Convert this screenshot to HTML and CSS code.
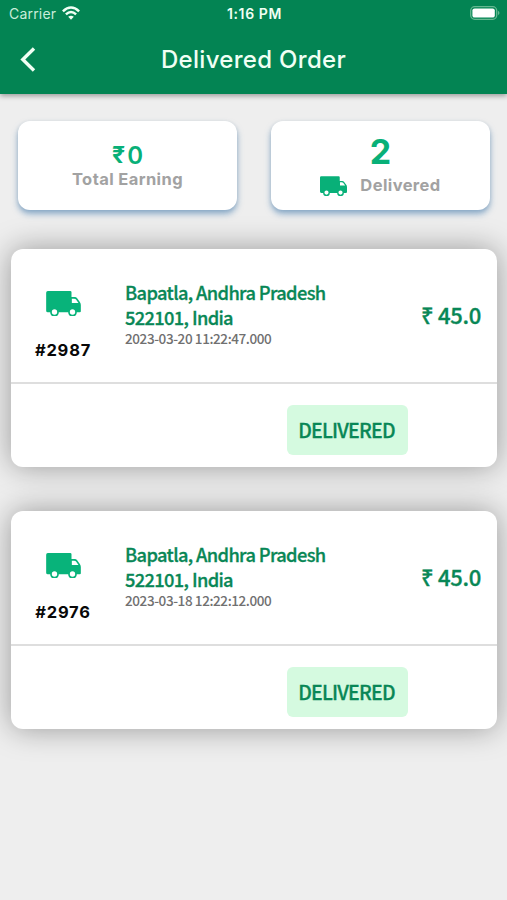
FILE: index.html
```html
<!DOCTYPE html>
<html lang="en">
<head>
<meta charset="utf-8">
<title>Delivered Order</title>
<link rel="stylesheet" href="styles.css">
</head>
<body>
<svg class="defs" aria-hidden="true">
  <symbol id="truck" viewBox="0 0 104 75">
    <path fill-rule="evenodd" d="M5 0H72Q76 0 76 4V18H86Q90 18 93 22L101 33Q104 37 104 42V61Q104 64 101 64H92A13 13 0 0 1 66 64H38A13 13 0 0 1 12 64H5Q0 64 0 59V5Q0 0 5 0ZM77 23V36H97L89 25Q87 23 84 23ZM25 55A8 8 0 1 0 25 71A8 8 0 1 0 25 55ZM79 55A8 8 0 1 0 79 71A8 8 0 1 0 79 55Z"/>
  </symbol>
</svg>
<header class="header">
  <div class="status">
    <div class="carrier"><span class="carrier-name">Carrier</span>
      <svg class="wifi" viewBox="0 0 18 14" fill="none" stroke="#f0fff4" stroke-width="2.5"><path d="M.9 5.3Q9-2.3 17.1 5.3M3.9 8.4Q9 3.7 14.1 8.4"/><path d="M6.2 10.8Q9 8.5 11.8 10.8L9 13.8Z" fill="#f0fff4" stroke="none"/></svg>
    </div>
    <span class="time">1:16 PM</span>
    <svg class="battery" viewBox="0 0 30 14"><rect x=".7" y=".7" width="26" height="12.6" rx="4" fill="none" stroke="#65b891" stroke-width="1.3"/><rect x="2.4" y="2.4" width="22.4" height="9.2" rx="2.2" fill="#fff"/><path d="M28 4.8Q31 7 28 9.2Z" fill="#65b891"/></svg>
  </div>
  <div class="appbar">
    <svg class="back" viewBox="0 0 16 25" fill="none" stroke="#f0fff4" stroke-width="3.4"><path d="M14 1.5L2.8 12.5L14 23.5"/></svg>
    <h1 class="title">Delivered Order</h1>
  </div>
</header>
<main>
  <section class="stats">
    <div class="stat">
      <div class="earning"><span class="rupee">₹</span>0</div>
      <div class="stat-label">Total Earning</div>
    </div>
    <div class="stat">
      <div class="count">2</div>
      <div class="stat-row"><svg class="truck-small"><use href="#truck"/></svg><span class="stat-label">Delivered</span></div>
    </div>
  </section>
  <section class="orders">
    <article class="order">
      <div class="order-top">
        <div class="order-id"><svg class="truck"><use href="#truck"/></svg><span class="number">#2987</span></div>
        <div class="details"><div class="address">Bapatla, Andhra Pradesh<br>522101, India</div><div class="date">2023-03-20 11:22:47.000</div></div>
        <div class="price">₹ 45.0</div>
      </div>
      <div class="order-bottom"><span class="badge">DELIVERED</span></div>
    </article>
    <article class="order">
      <div class="order-top">
        <div class="order-id"><svg class="truck"><use href="#truck"/></svg><span class="number">#2976</span></div>
        <div class="details"><div class="address">Bapatla, Andhra Pradesh<br>522101, India</div><div class="date">2023-03-18 12:22:12.000</div></div>
        <div class="price">₹ 45.0</div>
      </div>
      <div class="order-bottom"><span class="badge">DELIVERED</span></div>
    </article>
  </section>
</main>
</body>
</html>
```
FILE: styles.css
```css
* { box-sizing: border-box; }
body {
  margin: 0;
  height: 900px;
  overflow: hidden;
  background: #eee;
  font-family: Inter, "Liberation Sans", sans-serif;
  white-space: nowrap;
}
.defs { display: none; }
svg { display: block; flex: none; }
.header {
  height: 94px;
  background: #038453;
  color: #f0fff4;
  box-shadow: 0 2px 5px rgba(0, 0, 0, .35);
}
.status {
  height: 26px;
  display: grid;
  grid-template-columns: 1fr auto 1fr;
  align-items: center;
  padding: 0 7px 0 9px;
}
.carrier { display: flex; align-items: center; gap: 6px; }
.carrier-name { font-size: 14px; letter-spacing: .2px; color: #c9edda; }
.wifi { width: 18px; height: 14px; }
.time { font-size: 14px; font-weight: 600; letter-spacing: .6px; }
.battery { width: 30px; height: 14px; justify-self: end; }
.appbar {
  height: 67px;
  display: grid;
  grid-template-columns: 1fr auto 1fr;
  align-items: center;
  padding: 0 20px;
}
.back { width: 16px; height: 25px; }
.title { margin: 0; font-size: 24px; line-height: 30px; font-weight: 500; letter-spacing: .3px; }
.stats { display: flex; gap: 34px; padding: 27px 17px 0 18px; }
.stat {
  flex: 1;
  height: 89px;
  display: flex;
  flex-direction: column;
  align-items: center;
  border-radius: 12px;
  background: #fff;
  box-shadow: 0 4px 6px rgba(75, 130, 180, .6), 0 1px 4px rgba(0, 0, 0, .08);
}
.earning { display: flex; align-items: center; margin-top: 21px; font-size: 24px; line-height: 27px; font-weight: 600; color: #08b078; }
.rupee { font-size: 23px; margin-right: 2px; font-weight: 700; }
.stat-label { font-size: 16.5px; line-height: 21px; font-weight: 700; letter-spacing: .4px; color: #a2a2a2; }
.count { margin-top: 11px; font-size: 34px; line-height: 40px; font-weight: 700; color: #08b078; }
.stat-row { display: flex; align-items: center; gap: 13px; margin-top: 3px; }
.truck-small { width: 27px; height: 20px; fill: #08b078; }
.orders { display: grid; gap: 44px; padding: 39px 10px 0 11px; }
.order {
  height: 218px;
  border-radius: 12px;
  background: #fff;
  box-shadow: 0 0 30px rgba(0, 0, 0, .36);
}
.order-top {
  height: 135px;
  display: flex;
  border-bottom: 2px solid #dedede;
}
.order-id { width: 104px; display: flex; flex-direction: column; align-items: center; padding-top: 42px; }
.truck { width: 35px; height: 25px; fill: #08b37a; }
.number { margin-top: 24px; font-size: 16.5px; line-height: 20px; font-weight: 700; letter-spacing: .8px; color: #080808; }
.details { flex: 1; padding: 31px 0 0 10px; font-family: "Noto Sans CJK SC", sans-serif; }
.address { font-size: 18.3px; line-height: 24.5px; font-weight: 500; letter-spacing: -.65px; color: #088756; -webkit-text-stroke: .3px #088756; }
.date { font-size: 13.5px; line-height: 19px; color: #707070; font-weight: 500; letter-spacing: -.4px; }
.price { margin-top: 50px; padding-right: 16px; font: 500 22px/30px "Noto Sans CJK SC", "Noto Sans", sans-serif; letter-spacing: -.3px; color: #088756; -webkit-text-stroke: .35px #088756; }
.order-bottom { padding: 21px 0 0 276px; }
.badge {
  display: flex;
  align-items: center;
  justify-content: center;
  width: 121px;
  height: 50px;
  border-radius: 6px;
  background: #d5fae0;
  color: #088756;
  font: 500 19.5px/50px "Noto Sans CJK SC", sans-serif;
  letter-spacing: -.8px;
  padding-right: 2px;
  -webkit-text-stroke: .3px #088756;
}
```
